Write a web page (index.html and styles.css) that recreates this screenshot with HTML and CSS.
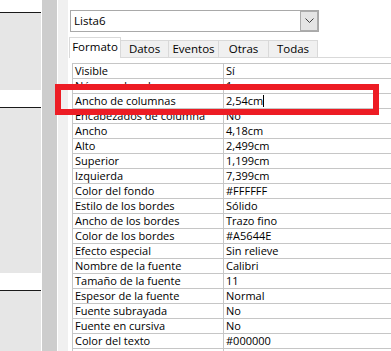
FILE: index.html
```html
<!DOCTYPE html>
<html lang="es">
<head>
<meta charset="utf-8">
<title>Hoja de propiedades</title>
<link rel="stylesheet" href="styles.css">
</head>
<body>
<div class="screen">
  <div class="form-col">
    <div class="sec white first"></div>
    <div class="sec gray s1"></div>
    <div class="sec white"></div>
    <div class="sec gray s2"></div>
    <div class="sec white"></div>
    <div class="sec gray last"></div>
  </div>
  <div class="vline"></div>
  <div class="ruler"></div>
  <div class="vline"></div>
  <div class="gutter"></div>
  <div class="panel">
    <div class="combo">
      <span class="combo-text">Lista6</span>
      <span class="combo-btn">
        <svg width="9" height="6" viewBox="0 0 9 6"><polyline points="0.5,0.5 4.5,4.5 8.5,0.5" fill="none" stroke="#3c3c3c" stroke-width="1"/></svg>
      </span>
    </div>
    <div class="tabs">
      <div class="tab active t1">Formato</div>
      <div class="tab t2">Datos</div>
      <div class="tab t3">Eventos</div>
      <div class="tab t4">Otras</div>
      <div class="tab t5">Todas</div>
    </div>
    <div class="grid">
      <div class="row"><div class="k">Visible</div><div class="v">Sí</div></div>
      <div class="row"><div class="k">Número de columnas</div><div class="v">1</div></div>
      <div class="row"><div class="k">Ancho de columnas</div><div class="v">2,54cm<span class="caret"></span></div></div>
      <div class="row"><div class="k">Encabezados de columna</div><div class="v">No</div></div>
      <div class="row"><div class="k">Ancho</div><div class="v">4,18cm</div></div>
      <div class="row"><div class="k">Alto</div><div class="v">2,499cm</div></div>
      <div class="row"><div class="k">Superior</div><div class="v">1,199cm</div></div>
      <div class="row"><div class="k">Izquierda</div><div class="v">7,399cm</div></div>
      <div class="row"><div class="k">Color del fondo</div><div class="v">#FFFFFF</div></div>
      <div class="row"><div class="k">Estilo de los bordes</div><div class="v">Sólido</div></div>
      <div class="row"><div class="k">Ancho de los bordes</div><div class="v">Trazo fino</div></div>
      <div class="row"><div class="k">Color de los bordes</div><div class="v">#A5644E</div></div>
      <div class="row"><div class="k">Efecto especial</div><div class="v">Sin relieve</div></div>
      <div class="row"><div class="k">Nombre de la fuente</div><div class="v">Calibri</div></div>
      <div class="row"><div class="k">Tamaño de la fuente</div><div class="v">11</div></div>
      <div class="row"><div class="k">Espesor de la fuente</div><div class="v">Normal</div></div>
      <div class="row"><div class="k">Fuente subrayada</div><div class="v">No</div></div>
      <div class="row"><div class="k">Fuente en cursiva</div><div class="v">No</div></div>
      <div class="row"><div class="k">Color del texto</div><div class="v">#000000</div></div>
      <div class="row"><div class="k"></div><div class="v"></div></div>
    </div>
  </div>
  <div class="highlight"></div>
</div>
</body>
</html>
```
FILE: styles.css
```css
* { box-sizing: border-box; }
html, body { margin: 0; padding: 0; }
body {
  width: 391px;
  height: 351px;
  overflow: hidden;
  background: #ffffff;
  font-family: "Open Sans", "Noto Sans", sans-serif;
  font-size: 11px;
  color: #000;
}
.screen {
  position: relative;
  display: flex;
  width: 391px;
  height: 351px;
  overflow: hidden;
}
.form-col {
  width: 41px;
  display: flex;
  flex-direction: column;
}
.sec.white {
  height: 18px;
  background: #ffffff;
  border-bottom: 1px solid #1a1a1a;
}
.sec.first { height: 13px; }
.sec.gray { background: #e6e6e6; }
.sec.s1 { height: 77px; }
.sec.s2 { height: 165px; }
.sec.last { flex: 1; }
.vline { width: 1px; background: #ffffff; }
.ruler { width: 15px; background: #cdcdcd; }
.gutter { width: 10px; background: #f0f0f0; }
.panel {
  flex: 1;
  background: #ffffff;
  padding-top: 10px;
  display: flex;
  flex-direction: column;
  min-width: 0;
}
.combo {
  margin-left: 2px;
  width: 249px;
  height: 22px;
  border: 1px solid #a9a9a9;
  display: flex;
  align-items: center;
  justify-content: space-between;
}
.combo-text {
  padding-left: 3px;
  font-size: 11.5px;
  line-height: 14px;
}
.combo-btn {
  width: 18px;
  height: 20px;
  background: #e5e5e5;
  border: 1px solid #acacac;
  display: flex;
  align-items: center;
  justify-content: center;
}
.tabs {
  margin-top: 5px;
  margin-left: 1px;
  height: 21px;
  display: flex;
  align-items: flex-end;
  border-bottom: 1px solid #d9d9d9;
}
.tab {
  height: 17px;
  background: #f0f0f0;
  border: 1px solid #d9d9d9;
  border-left: none;
  border-bottom: none;
  text-align: center;
  line-height: 16px;
  font-size: 11.5px;
}
.tab.active {
  height: 21px;
  background: #ffffff;
  border-left: 1px solid #d9d9d9;
  margin-bottom: -1px;
  line-height: 16px;
  padding-top: 1px;
}
.t1 { width: 52px; }
.t2 { width: 48px; }
.t3 { width: 50px; }
.t4 { width: 50px; }
.t5 { width: 49px; }
.grid {
  margin-top: 5px;
  margin-left: 4px;
  border-top: 1px solid #c6c6c6;
  border-left: 1px solid #c6c6c6;
}
.row {
  display: flex;
  height: 15px;
  border-bottom: 1px solid #c6c6c6;
}
.k {
  width: 151px;
  flex: none;
  border-right: 1px solid #c6c6c6;
  padding-left: 2px;
  line-height: 14px;
  white-space: nowrap;
  overflow: hidden;
}
.v {
  flex: 1;
  padding-left: 2px;
  line-height: 14px;
  white-space: nowrap;
}
.caret {
  display: inline-block;
  width: 1px;
  height: 12px;
  background: #000;
  vertical-align: -2px;
}
.highlight {
  position: absolute;
  left: 55px;
  top: 84px;
  width: 324px;
  height: 31px;
  border: 6px solid #ed1c24;
}
```
